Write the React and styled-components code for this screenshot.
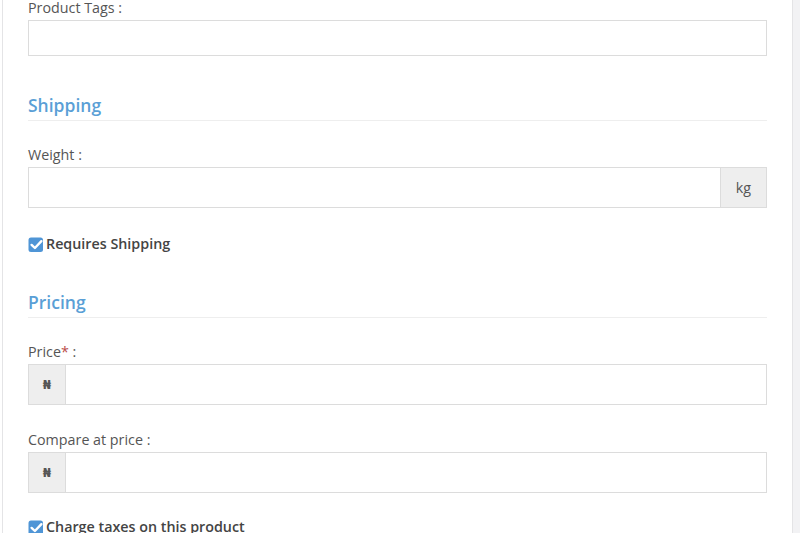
import React from "react";
import styled, { createGlobalStyle } from "styled-components";

const Global = createGlobalStyle`
  html, body { margin: 0; padding: 0; background: #ffffff; }
  body { font-family: "Open Sans", "Noto Sans", sans-serif; color: #555; overflow: hidden; }
  * { box-sizing: border-box; }
`;

const Page = styled.div`
  display: flex;
  min-height: 533px;
  padding-left: 2px;
`;

const Panel = styled.div`
  flex: 1;
  border-left: 1px solid #e4e4e6;
  border-right: 1px solid #e4e4e6;
  padding: 0 25px;
  margin-top: -2px;
`;

const Strip = styled.div`
  width: 7px;
  background: #f2f2f4;
`;

const Group = styled.div`
  margin-bottom: ${(p) => p.$mb ?? 25}px;
`;

const Label = styled.div`
  font-size: 14.3px;
  line-height: 20px;
  color: #555;
  margin-bottom: 2px;
`;

const Req = styled.span`
  color: #b94a48;
`;

const TextInput = styled.div`
  height: 36px;
  border: 1px solid #dcdcdc;
  background: #fff;
`;

const InputGroup = styled.div`
  display: flex;
  height: 41px;
  border: 1px solid #dcdcdc;
  background: #fff;
`;

const Field = styled.div`
  flex: 1;
`;

const Addon = styled.div`
  width: ${(p) => p.$w}px;
  display: flex;
  align-items: center;
  justify-content: center;
  background: #eeeeee;
  ${(p) => (p.$side === "left" ? "border-right" : "border-left")}: 1px solid #dcdcdc;
  font-size: ${(p) => p.$fs}px;
  font-weight: ${(p) => p.$fw};
  color: #555;
  font-family: ${(p) => (p.$naira ? '"DejaVu Sans", sans-serif' : '"Open Sans", sans-serif')};
`;

const Heading = styled.h3`
  margin: ${(p) => p.$mt}px 0 24px;
  padding-bottom: 4px;
  font-size: 17.5px;
  line-height: 22px;
  font-weight: 600;
  color: #5a9fd6;
  border-bottom: 1px solid #eeeeee;
`;

const Check = styled.div`
  display: flex;
  align-items: center;
  gap: 0;
  font-size: 14.3px;
  line-height: 20px;
  font-weight: 600;
  color: #444;
`;

const CheckIcon = () => (
  <svg width="18" height="17" viewBox="0 0 18 17" aria-hidden="true">
    <rect x="0.5" y="1.5" width="14.5" height="14.5" rx="2.5" fill="#4f95d6" />
    <path d="M3.6 8.9 L6.9 12 L13.4 5.2" fill="none" stroke="#fff" strokeWidth="2.4" strokeLinecap="round" strokeLinejoin="round" />
  </svg>
);

export default function App() {
  return (
    <>
      <Global />
      <Page>
        <Panel>
          <Group $mb={0}>
            <Label>Product Tags :</Label>
            <TextInput />
          </Group>

          <Heading $mt={38}>Shipping</Heading>

          <Group $mb={26}>
            <Label>Weight :</Label>
            <InputGroup>
              <Field />
              <Addon $w={46} $fs={14.3} $fw={400}>kg</Addon>
            </InputGroup>
          </Group>

          <Check>
            <CheckIcon />
            Requires Shipping
          </Check>

          <Heading $mt={37}>Pricing</Heading>

          <Group>
            <Label>
              Price<Req>*</Req> :
            </Label>
            <InputGroup>
              <Addon $side="left" $w={37} $fs={12} $fw={700} $naira>₦</Addon>
              <Field />
            </InputGroup>
          </Group>

          <Group $mb={24}>
            <Label>Compare at price :</Label>
            <InputGroup>
              <Addon $side="left" $w={37} $fs={12} $fw={700} $naira>₦</Addon>
              <Field />
            </InputGroup>
          </Group>

          <Check>
            <CheckIcon />
            Charge taxes on this product
          </Check>
        </Panel>
        <Strip />
      </Page>
    </>
  );
}
